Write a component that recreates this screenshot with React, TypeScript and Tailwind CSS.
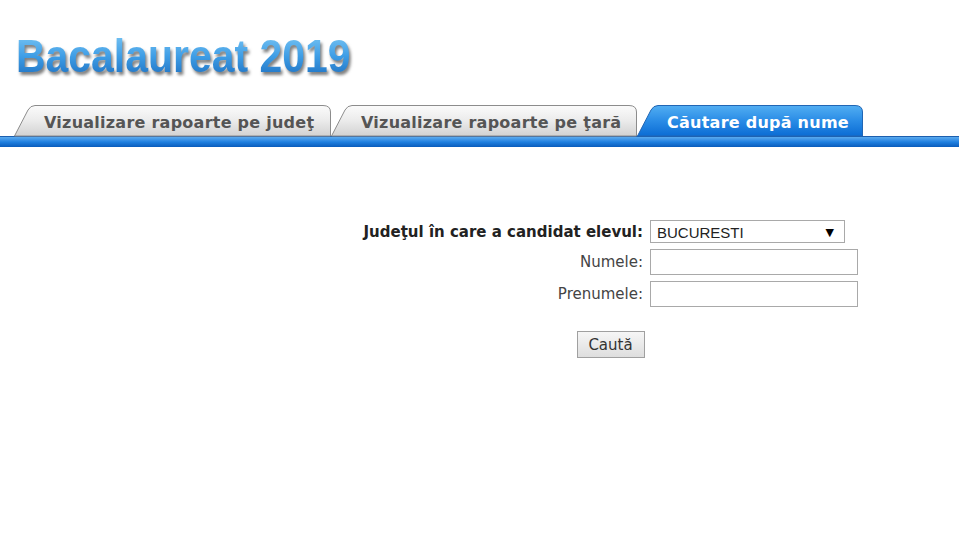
import React from "react";

function Tab({
  width,
  label,
  active,
  id,
}: {
  width: number;
  label: string;
  active?: boolean;
  id: string;
}) {
  const h = 31;
  const w = width;
  const d = `M0.5,${h} L14,5 Q16.5,0.5 21,0.5 L${w - 8},0.5 Q${w - 0.5},0.5 ${w - 0.5},7 L${w - 0.5},${h} Z`;
  return (
    <div className="relative h-[31px] shrink-0" style={{ width: w }}>
      <svg className="absolute inset-0" width={w} height={h + 1} viewBox={`0 0 ${w} ${h + 1}`}>
        <defs>
          <linearGradient id={id} x1="0" y1="0" x2="0" y2="1">
            {active ? (
              <>
                <stop offset="0" stopColor="#52aef2" />
                <stop offset="0.5" stopColor="#2a8ce6" />
                <stop offset="1" stopColor="#0b6cd4" />
              </>
            ) : (
              <>
                <stop offset="0" stopColor="#fbfbfb" />
                <stop offset="0.5" stopColor="#ebebeb" />
                <stop offset="1" stopColor="#d2d2d2" />
              </>
            )}
          </linearGradient>
        </defs>
        <path d={d} fill={`url(#${id})`} stroke={active ? "#2166b4" : "#8c8c8c"} strokeWidth="1" />
      </svg>
      <div
        className={`relative pl-[30px] pt-[8px] whitespace-nowrap text-[16px] tracking-[0.25px] font-bold leading-[20px] ${
          active ? "text-white" : "text-[#555555]"
        }`}
        style={{ fontFamily: '"DejaVu Sans", Verdana, sans-serif' }}
      >
        {label}
      </div>
    </div>
  );
}

export default function App() {
  const font = { fontFamily: '"DejaVu Sans", Verdana, sans-serif' };
  return (
    <div className="min-h-screen w-full bg-white">
      <div className="h-[105px] pl-[16px] pt-[33px]">
        <div
          className="inline-block origin-left scale-x-[0.89] text-[46px] font-bold leading-none bg-gradient-to-b from-[#79c6f3] via-[#3f9ee6] to-[#1d6fc0] bg-clip-text text-transparent drop-shadow-[2px_3px_1.5px_rgba(40,40,40,0.6)]"
          style={{ fontFamily: '"Liberation Sans", Arial, sans-serif' }}
        >
          Bacalaureat 2019
        </div>
      </div>

      <div className="flex h-[31px] pl-[14px]">
        <Tab id="t1" width={317} label="Vizualizare rapoarte pe judeţ" />
        <Tab id="t2" width={306} label="Vizualizare rapoarte pe ţară" />
        <Tab id="t3" width={226} label="Căutare după nume" active />
      </div>

      <div className="h-[11px] border-t border-[#1d5fae] bg-gradient-to-b from-[#5aaaee] via-[#1f80e0] to-[#0a5cbc]" />

      <div className="pt-[73px]" style={font}>
        <div className="ml-[363px] inline-grid grid-cols-[280px_auto] gap-x-[7px] items-center">
          <div className="flex justify-end whitespace-nowrap pt-[1px] text-[15px] font-bold text-[#222222]">
            Judeţul în care a candidat elevul:
          </div>
          <div className="h-[23px] w-[195px] border border-[#a9a9a9] bg-white flex items-center justify-between pl-[6px] pr-[10px] pt-[2px]">
            <span className="text-[15px] text-[#222222]" style={{ fontFamily: '"Liberation Sans", Arial, sans-serif' }}>
              BUCURESTI
            </span>
            <span className="text-[11px] text-black leading-none">▼</span>
          </div>

          <div className="mt-[5px] pt-[1px] flex justify-end whitespace-nowrap text-[15px] text-[#444444]">Numele:</div>
          <div className="mt-[5px] h-[26px] w-[208px] border border-[#a9a9a9] bg-white" />

          <div className="mt-[6px] pt-[1px] flex justify-end whitespace-nowrap text-[15px] text-[#444444]">Prenumele:</div>
          <div className="mt-[6px] h-[26px] w-[208px] border border-[#a9a9a9] bg-white" />

          <div className="col-span-2 mt-[24px] flex justify-center">
            <button className="h-[27px] w-[68px] border border-[#a0a0a0] bg-gradient-to-b from-[#f6f6f6] to-[#dedede] pt-[2px] text-[15px] text-[#333333]">
              Caută
            </button>
          </div>
        </div>
      </div>
    </div>
  );
}
